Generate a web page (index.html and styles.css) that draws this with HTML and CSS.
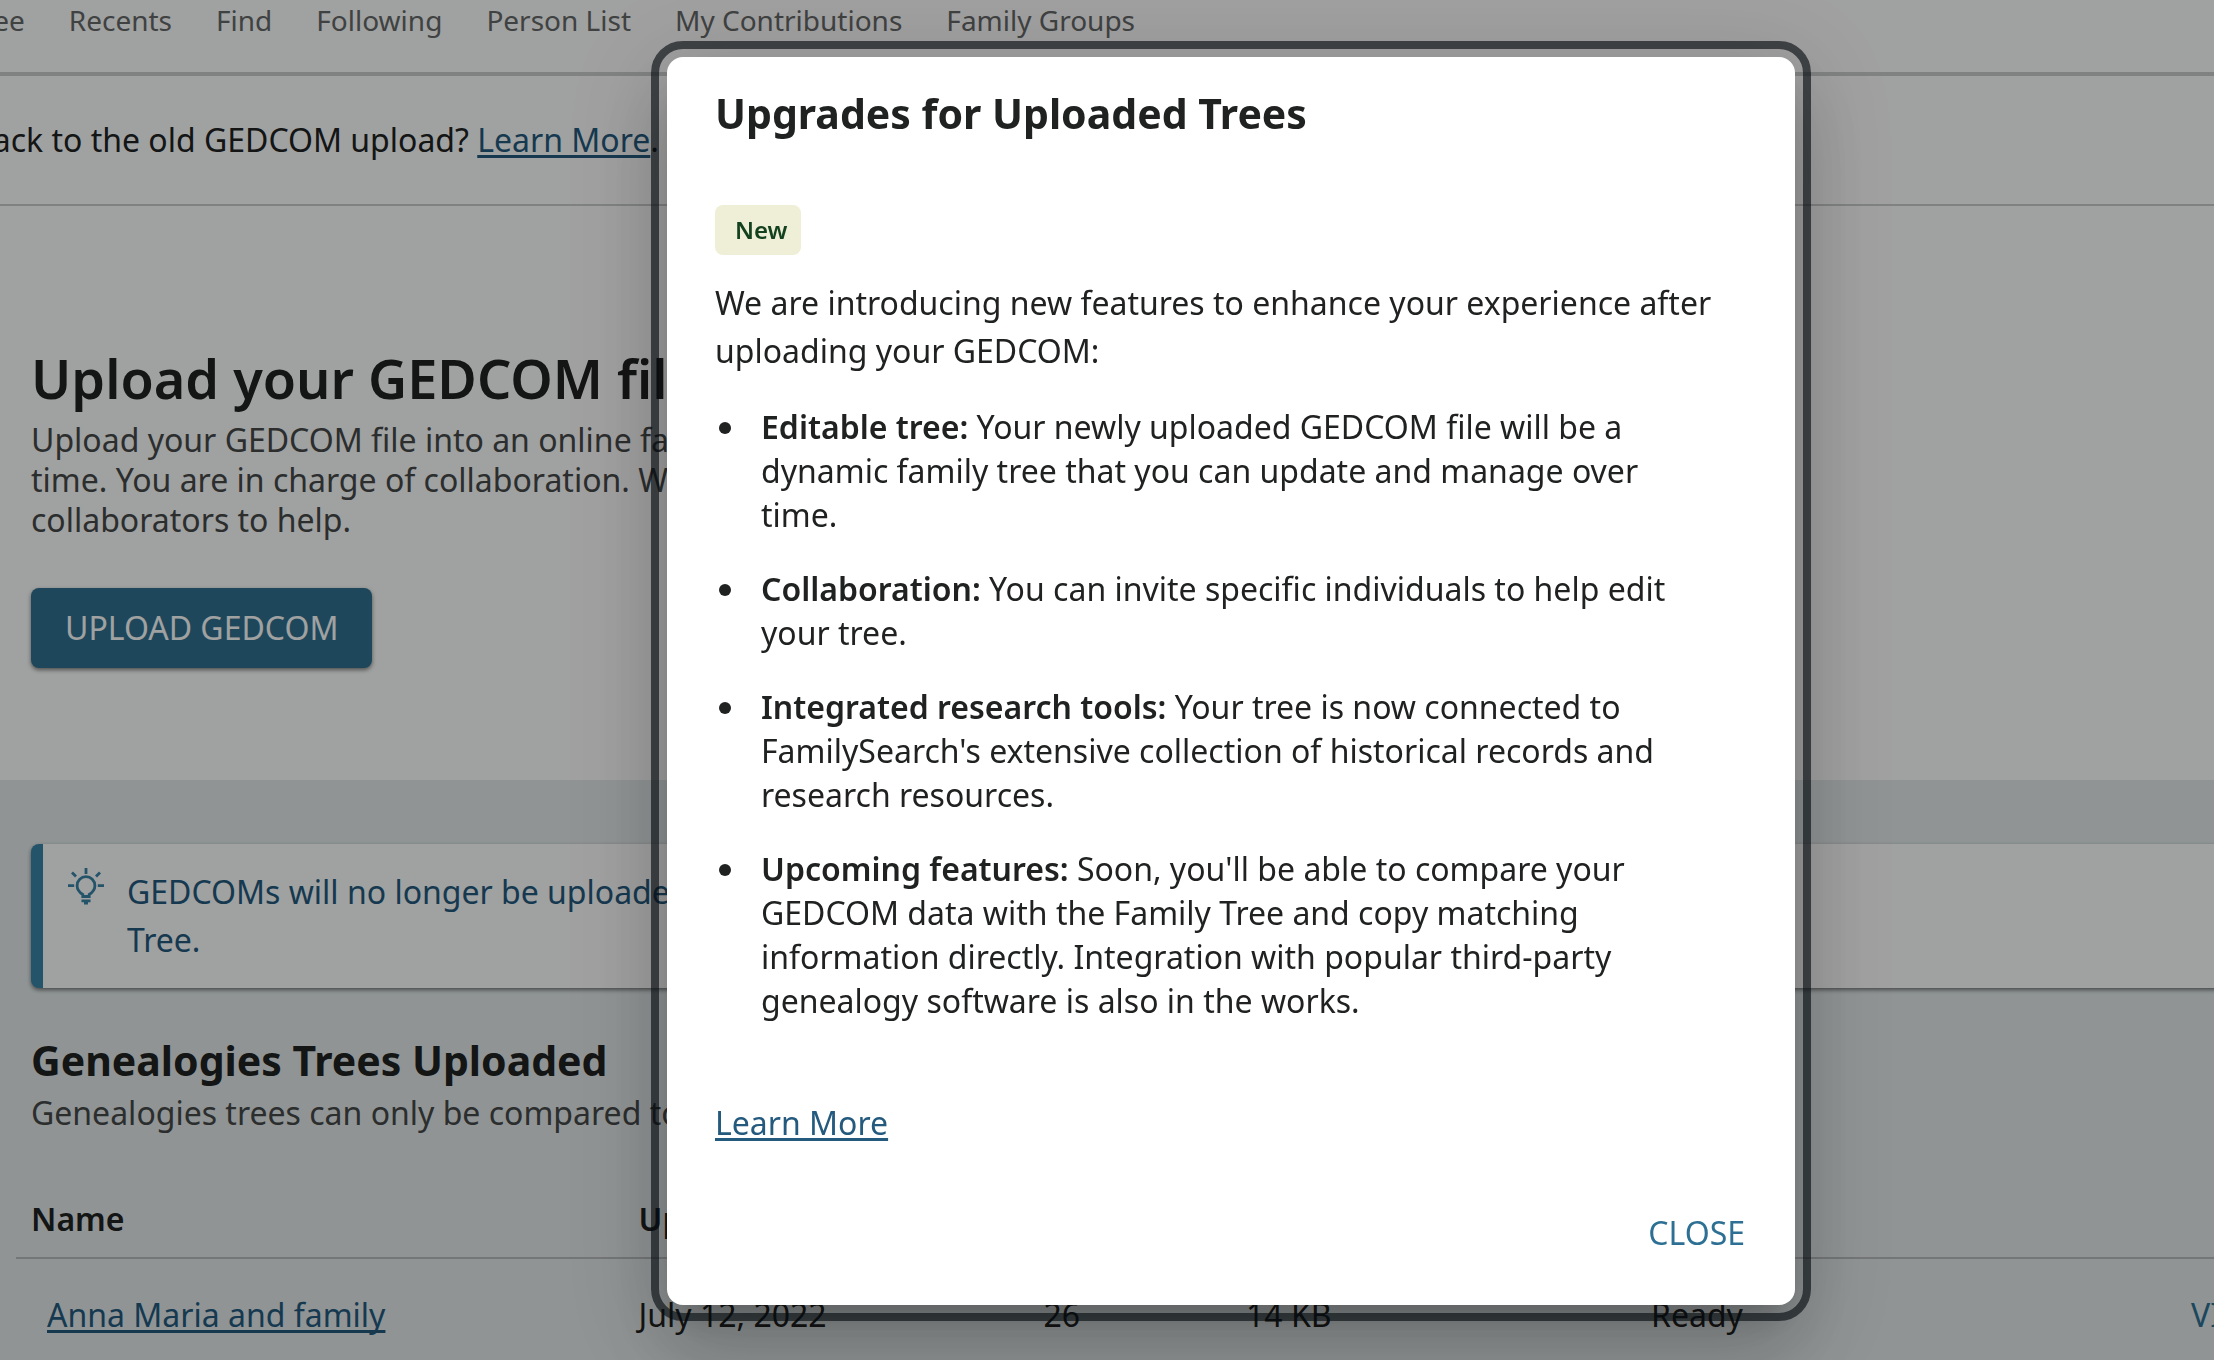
FILE: index.html
```html
<!DOCTYPE html>
<html lang="en">
<head>
  <meta charset="UTF-8">
  <title>Upload GEDCOM</title>
  <link rel="stylesheet" href="styles.css">
</head>
<body>
  <div class="page">
    <nav class="main-nav">
      <a href="#">Tree</a>
      <a href="#">Recents</a>
      <a href="#">Find</a>
      <a href="#">Following</a>
      <a href="#">Person List</a>
      <a href="#">My Contributions</a>
      <a href="#">Family Groups</a>
    </nav>

    <div class="banner">
      <p>back to the old GEDCOM upload? <a class="link" href="#">Learn More</a>.</p>
    </div>

    <section class="upload">
      <h1>Upload your GEDCOM file</h1>
      <p>Upload your GEDCOM file into an online family tree that you can edit over<br>
        time. You are in charge of collaboration. When you are ready, invite<br>
        collaborators to help.</p>
      <button class="upload-button" type="button">UPLOAD GEDCOM</button>
    </section>

    <section class="trees">
      <div class="notice">
        <svg class="notice-icon" viewBox="0 0 38 38" fill="none" stroke="currentColor" stroke-width="2.8">
          <path d="M19 0v6M5 4.500l4 4M33 4.500l-4 4M1 17.700h6.200M30.800 17.700H37"/>
          <path d="M15.800 28.500v-2c-3-2-5.700-4.800-5.700-8.800a8.900 9 0 0 1 17.800 0c0 4-2.700 6.800-5.700 8.800v2z"/>
          <path d="M14.500 32.800h9M17 35h4"/>
        </svg>
        <p>GEDCOMs will no longer be uploaded to Genealogies or compared to Family<br>Tree.</p>
      </div>

      <h2>Genealogies Trees Uploaded</h2>
      <p class="subtitle">Genealogies trees can only be compared to Family Tree.</p>

      <table class="tree-table">
        <thead>
          <tr>
            <th class="col-name">Name</th>
            <th class="col-date">Uploaded</th>
            <th class="col-count">People</th>
            <th class="col-size">Size</th>
            <th class="col-status">Status</th>
            <th class="col-action"></th>
          </tr>
        </thead>
        <tbody>
          <tr>
            <td class="tree-name"><a class="link" href="#">Anna Maria and family</a></td>
            <td>July 12, 2022</td>
            <td>26</td>
            <td>14 KB</td>
            <td>Ready</td>
            <td class="tree-action"><button class="text-button" type="button">VIEW</button></td>
          </tr>
        </tbody>
      </table>
    </section>
  </div>

  <div class="overlay">
    <div class="dialog" role="dialog" aria-modal="true" aria-labelledby="dialogTitle">
      <h2 id="dialogTitle">Upgrades for Uploaded Trees</h2>
      <span class="badge">New</span>
      <p>We are introducing new features to enhance your experience after uploading your GEDCOM:</p>
      <ul class="features">
        <li><strong>Editable tree:</strong> Your newly uploaded GEDCOM file will be a dynamic family tree that you can update and manage over time.</li>
        <li><strong>Collaboration:</strong> You can invite specific individuals to help edit your tree.</li>
        <li><strong>Integrated research tools:</strong> Your tree is now connected to FamilySearch's extensive collection of historical records and research resources.</li>
        <li><strong>Upcoming features:</strong> Soon, you'll be able to compare your GEDCOM data with the Family Tree and copy matching information directly. Integration with popular third-party genealogy software is also in the works.</li>
      </ul>
      <p><a class="link" href="#">Learn More</a></p>
      <div class="dialog-actions">
        <button class="text-button" type="button">CLOSE</button>
      </div>
    </div>
  </div>
</body>
</html>
```
FILE: styles.css
```css
* {
  box-sizing: border-box;
}

body {
  margin: 0;
  height: 100vh;
  overflow: hidden;
  background-color: #e5ebec;
  color: #202121;
  font-family: "Noto Sans", sans-serif;
  font-size: 32px;
  line-height: 48px;
}

h1, h2, p, ul {
  margin: 0;
}

h1, strong {
  font-weight: 600;
}

h2 {
  font-size: 41px;
  font-weight: 700;
  line-height: 56px;
}

button {
  font: inherit;
  border: none;
  cursor: pointer;
}

.link {
  color: #245a7e;
  text-decoration: underline;
  text-decoration-thickness: 3px;
  text-underline-offset: 3px;
  text-decoration-skip-ink: none;
}

/* the page runs past the right edge of the window */
.page {
  width: calc(100% + 248px);
}

.main-nav {
  display: flex;
  gap: 44px;
  padding-bottom: 32px;
  margin-left: -32px;
  border-bottom: 4px solid #cccece;
  background-color: #fff;
  font-size: 28px;
  line-height: 40px;
}

.main-nav a {
  color: #666868;
  text-decoration: none;
}

.banner {
  margin-left: -27px;
  padding: 40px 0;
  border-bottom: 2px solid #cccece;
  background-color: #fff;
}

.upload {
  padding: 140px 31px 112px;
  background-color: #fff;
}

.upload h1 {
  margin-bottom: 10px;
  font-size: 54px;
  line-height: 64px;
}

.upload p,
.subtitle {
  color: #464849;
  line-height: 40px;
}

.upload-button {
  height: 80px;
  margin-top: 48px;
  padding: 0 34px;
  border-radius: 8px;
  background-color: #307090;
  color: #fff;
  box-shadow: 0 2px 4px rgba(0, 0, 0, 0.5);
  display: block;
}

.trees {
  padding: 64px 16px 0;
}

.notice {
  display: flex;
  gap: 22px;
  margin: 0 15px 44px;
  padding: 24px;
  border-left: 12px solid #3a84a6;
  border-radius: 8px;
  background-color: #fff;
  color: #245a7e;
  box-shadow: 0 2px 4px rgba(0, 0, 0, 0.5);
}

.notice-icon {
  width: 38px;
  height: 38px;
  flex-shrink: 0;
  color: #3a84a6;
}

.trees h2 {
  padding: 0 15px;
}

.subtitle {
  padding: 5px 15px 48px;
}

.tree-table {
  width: 100%;
  table-layout: fixed;
  border-collapse: collapse;
  line-height: 44px;
}

.tree-table th {
  padding: 16px 15px;
  border-bottom: 2px solid #b8bcbe;
  text-align: left;
  font-weight: 600;
}

.tree-table td {
  padding: 34px 15px;
}

.tree-table .tree-name {
  padding-left: 31px;
}

.tree-table .tree-action {
  padding-left: 150px;
}

.col-name {
  width: 25%;
}

.col-count {
  width: calc(100% / 12);
}

.col-date,
.col-size,
.col-status,
.col-action {
  width: calc(100% / 6);
}

.text-button {
  padding: 0;
  background: none;
  color: #2d7093;
}

.overlay {
  position: fixed;
  inset: 0;
  display: flex;
  align-items: center;
  justify-content: center;
  padding: 2px 0 0 248px;
  background-color: rgba(0, 3, 4, 0.373);
}

.dialog {
  width: 1128px;
  padding: 28px 48px;
  border-radius: 16px;
  background-color: #fff;
  outline: 8px solid rgba(7, 13, 17, 0.64);
  outline-offset: 8px;
  box-shadow: 0 22px 30px -14px rgba(0, 0, 0, 0.2),
    0 48px 76px 6px rgba(0, 0, 0, 0.14),
    0 18px 92px 16px rgba(0, 0, 0, 0.12);
}

.dialog h2 {
  margin-bottom: 64px;
}

.badge {
  display: block;
  width: fit-content;
  margin-bottom: 24px;
  padding: 0 13px 0 20px;
  border-radius: 8px;
  background-color: #efeed6;
  color: #14421f;
  font-size: 24px;
  font-weight: 600;
  line-height: 50px;
}

.features {
  display: flex;
  flex-direction: column;
  gap: 30px;
  margin: 30px 0 76px;
  padding: 0 40px 0 46px;
  line-height: 44px;
  list-style: none;
}

.features li::before {
  content: "";
  display: inline-block;
  width: 12px;
  height: 12px;
  margin: 0 30px 5px -42px;
  border-radius: 50%;
  background-color: #202121;
}

.dialog-actions {
  display: flex;
  justify-content: flex-end;
  padding: 62px 2px 20px;
}
```
